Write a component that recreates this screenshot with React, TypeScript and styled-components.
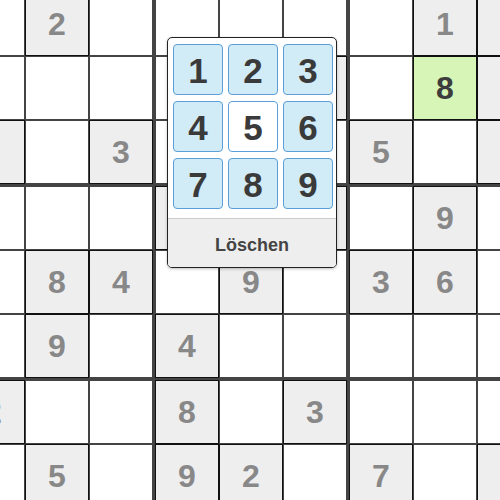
import styled, { createGlobalStyle } from "styled-components";

const GlobalStyle = createGlobalStyle`
  html, body {
    margin: 0;
    padding: 0;
    background: #fff;
    overflow: hidden;
  }
  body {
    font-family: "Liberation Sans", Arial, sans-serif;
  }
`;

type Kind = "empty" | "given" | "user" | "error";

interface ICell {
  value: string;
  kind: Kind;
}

// "." = empty, "g" = given, "u" = user entry, "e" = conflicting entry
// cells that sit past the visible edge or under the picker keep their shading but no digit
const rows: string[][] = [
  [".", "g2", ".", ".", ".", ".", ".", "g1", "g"],
  [".", ".", ".", ".", ".", "g", ".", "u8", "e4"],
  ["g", ".", "g3", ".", ".", ".", "g5", ".", "g"],
  [".", ".", ".", "g", ".", "g", ".", "g9", "."],
  [".", "g8", "g4", ".", "g9", ".", "g3", "g6", "."],
  [".", "g9", ".", "g4", ".", ".", ".", ".", "."],
  ["g2", ".", ".", "g8", ".", "g3", ".", ".", "."],
  [".", "g5", ".", "g9", "g2", ".", "g7", ".", "g"],
  [".", ".", ".", ".", ".", ".", ".", ".", "."],
];

const parse = (code: string): ICell => {
  if (code === ".") return { value: "", kind: "empty" };
  const kinds: Record<string, Kind> = { g: "given", u: "user", e: "error" };
  return { value: code.slice(1), kind: kinds[code[0]] };
};

const board: ICell[][] = rows.map((r) => r.map(parse));

const Page = styled.div`
  position: relative;
  width: 500px;
  height: 500px;
  overflow: hidden;
`;

const Board = styled.div`
  display: grid;
  grid-template-columns: repeat(3, 194px);
  grid-template-rows: repeat(3, 194px);
  margin: -9px 0 0 -40px;
  width: max-content;
`;

const Box = styled.div`
  display: grid;
  grid-template-columns: repeat(3, 64px);
  grid-template-rows: repeat(3, 64px);
  border: 1px solid #444;
`;

const cellBg: Record<Kind, string> = {
  empty: "#ffffff",
  given: "#eeeeee",
  user: "#d7f5b6",
  error: "#eeeeee",
};

const cellInk: Record<Kind, string> = {
  empty: "#888",
  given: "#888888",
  user: "#3d3d3d",
  error: "#f0a070",
};

const Cell = styled.div<{ $kind: Kind }>`
  box-sizing: border-box;
  display: flex;
  align-items: center;
  justify-content: center;
  border: 1px solid ${(p) => (p.$kind === "empty" ? "#444" : "#111")};
  background: ${(p) => cellBg[p.$kind]};
  color: ${(p) => cellInk[p.$kind]};
  font-size: 32px;
  font-weight: bold;
  line-height: 1;
`;

const Picker = styled.div`
  position: absolute;
  left: 167px;
  top: 37px;
  width: 170px;
  box-sizing: border-box;
  border: 1px solid #222;
  border-radius: 5px;
  background: #fff;
  overflow: hidden;
  box-shadow: 0 1px 3px rgba(0, 0, 0, 0.25);
`;

const Keypad = styled.div`
  display: grid;
  grid-template-columns: repeat(3, 50px);
  grid-auto-rows: 51px;
  column-gap: 5px;
  row-gap: 6px;
  padding: 6px 3px 9px 5px;
  border-bottom: 1px solid #cccccc;
`;

const Key = styled.div<{ $active?: boolean }>`
  box-sizing: border-box;
  display: flex;
  align-items: center;
  justify-content: center;
  border: 1px solid #5c9fd8;
  border-radius: 4px;
  background: ${(p) => (p.$active ? "#ffffff" : "#d1ebf7")};
  color: #3a3a3a;
  font-size: 35px;
  font-weight: bold;
  line-height: 1;
  padding-top: 1px;
`;

const Clear = styled.div`
  box-sizing: border-box;
  height: 48px;
  padding-top: 4px;
  display: flex;
  align-items: center;
  justify-content: center;
  background: #eeeeee;
  color: #444;
  font-size: 18px;
  font-weight: bold;
`;

const boxCells = (bi: number) => {
  const r0 = Math.floor(bi / 3) * 3;
  const c0 = (bi % 3) * 3;
  const out: ICell[] = [];
  for (let r = r0; r < r0 + 3; r++) {
    for (let c = c0; c < c0 + 3; c++) out.push(board[r][c]);
  }
  return out;
};

const App = () => {
  return (
    <Page>
      <GlobalStyle />
      <Board>
        {Array.from({ length: 9 }, (_, bi) => (
          <Box key={bi}>
            {boxCells(bi).map((cell, i) => (
              <Cell key={i} $kind={cell.kind}>
                {cell.value}
              </Cell>
            ))}
          </Box>
        ))}
      </Board>
      <Picker>
        <Keypad>
          {["1", "2", "3", "4", "5", "6", "7", "8", "9"].map((n) => (
            <Key key={n} $active={n === "5"}>
              {n}
            </Key>
          ))}
        </Keypad>
        <Clear>Löschen</Clear>
      </Picker>
    </Page>
  );
};

export default App;
